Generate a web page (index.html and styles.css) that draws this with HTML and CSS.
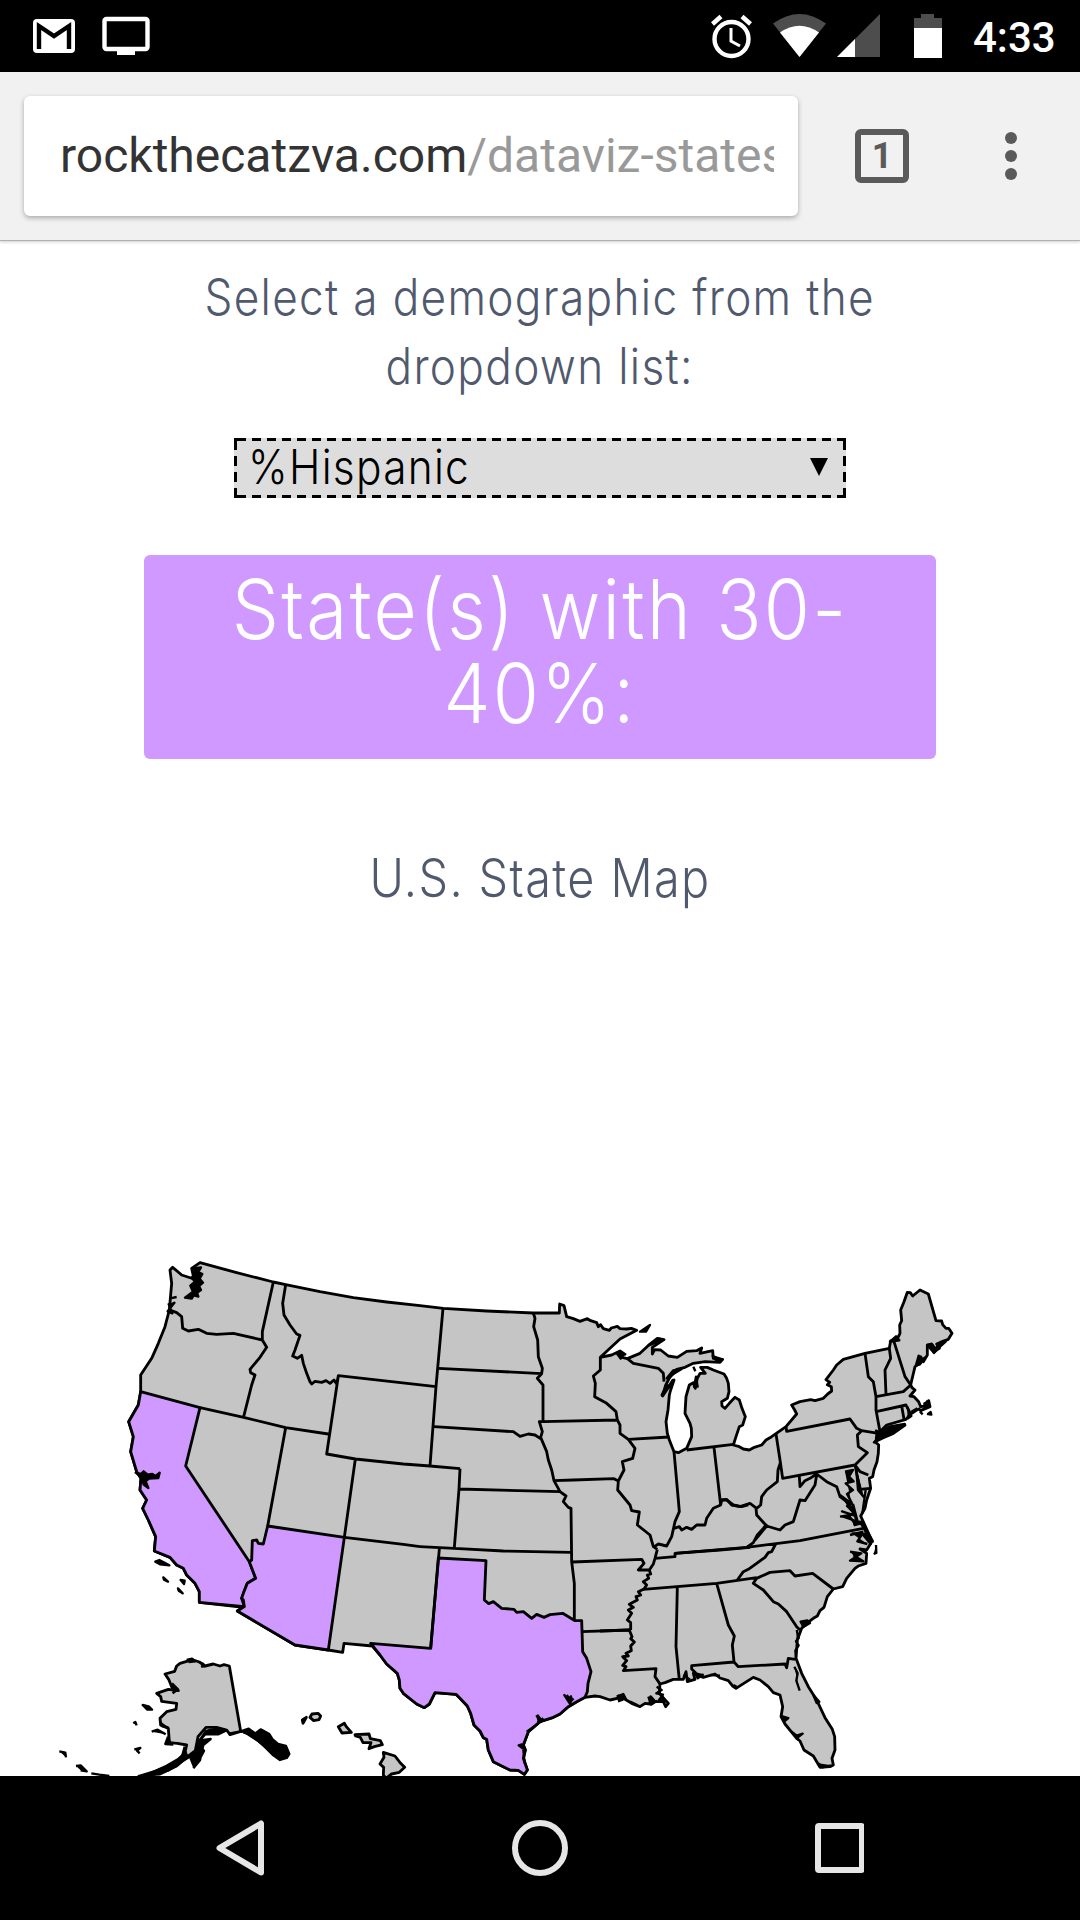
FILE: index.html
```html
<!DOCTYPE html>
<html lang="en">
<head>
<meta charset="utf-8">
<title>U.S. State Map</title>
<link rel="stylesheet" href="styles.css">
</head>
<body>
<header class="status">
  <svg class="status-left" width="120" height="72" viewBox="32 0 120 72">
    <rect x="33" y="19" width="42" height="34" rx="4" fill="#fff"/>
    <path d="M39 49V26l15 10 15-10v23" fill="none" stroke="#000" stroke-width="4.4"/>
    <rect x="104.500" y="19" width="43" height="30" rx="2" fill="none" stroke="#fff" stroke-width="4.400"/>
    <path d="M117 50h18v5h-18z" fill="#fff"/>
  </svg>
  <svg class="status-right" width="236" height="72" viewBox="708 0 236 72">
    <g fill="none" stroke="#fff">
      <circle cx="731.500" cy="39" r="17" stroke-width="4.400"/>
      <path d="M712.500 24l8.500-7.500M750.500 24l-8.500-7.500" stroke-width="4.500"/>
      <path d="M731 28v13l9 5" stroke-width="3"/>
    </g>
    <path d="M799.500 57l-26.500-33.500q26.500-19 53 0z" fill="#4d4d4d"/>
    <path d="M799.500 57l-19.500-24.500q19.500-13.500 39 0z" fill="#fff"/>
    <path d="M837 57L880 14v43z" fill="#4d4d4d"/>
    <path d="M837 57l18-18v18z" fill="#fff"/>
    <path d="M914 18h7v-4h13v4h8v11h-28z" fill="#4d4d4d"/>
    <path d="M914 28h28v30h-28z" fill="#fff"/>
  </svg>
  <span class="clock">4:33</span>
</header>
<div class="toolbar">
  <div class="omnibox"><div class="url">rockthecatzva.com<span>/dataviz-states</span></div></div>
  <div class="tabs">1</div>
  <div class="menu"><i></i><i></i><i></i></div>
</div>
<main>
  <p class="prompt"><span class="line">Select a demographic from the</span><span class="line">dropdown list:</span></p>
  <div class="select"><span class="value">%Hispanic</span><svg width="18" height="18" viewBox="0 0 18 18"><path d="M0 0h18L9 18z"/></svg></div>
  <div class="banner"><span class="line">State(s) with 30-</span><span class="line">40%:</span></div>
  <h2><span class="line">U.S. State Map</span></h2>
  <svg class="map" width="1080" height="526" viewBox="-360 0 3240 1578">
    <!-- contiguous states -->
    <path class="land" d="M240 38L350 68 460 96 497 104 600 125 700 143 800 156 900 167 970 175 1100 183 1240 189 1318 189 1319 162 1332 167 1340 200 1360 206 1380 214 1402 206 1412 212 1430 218 1435 230 1442 224 1450 236 1468 241 1474 234 1492 229 1500 236 1520 237 1534 235 1550 241 1500 267 1470 295 1441 322 1475 315 1500 303 1515 313 1502 309 1506 322 1522 326 1560 310 1590 282 1612 265 1632 269 1615 280 1597 292 1597 312 1604 299 1622 300 1645 318 1672 322 1700 304 1730 302 1745 294 1740 310 1778 302 1780 325 1808 328 1800 337 1755 335 1720 340 1695 352 1670 358 1648 384 1636 408 1628 438 1640 420 1662 390 1652 420 1648 435 1644 480 1638 515 1642 550 1648 570 1662 605 1675 608 1700 595 1715 560 1714 535 1710 520 1695 490 1698 440 1708 405 1720 398 1726 415 1732 385 1740 370 1756 370 1742 352 1762 352 1780 360 1812 372 1820 385 1825 400 1827 425 1822 445 1805 455 1806 468 1815 475 1828 460 1845 442 1858 450 1866 475 1876 500 1868 525 1858 530 1848 560 1840 585 1858 590 1870 597 1888 600 1903 592 1925 585 1938 570 1955 560 1998 530 2030 492 2024 480 2015 465 2040 455 2072 449 2085 452 2110 445 2123 432 2135 423 2134 410 2122 404 2129 397 2118 389 2140 360 2150 345 2170 328 2235 310 2308 295 2312 273 2330 270 2340 250 2339 225 2345 212 2342 180 2352 155 2362 127 2371 128 2378 138 2400 120 2425 132 2448 212 2465 213 2468 224 2478 235 2486 235 2496 250 2485 268 2468 274 2450 282 2458 295 2442 305 2436 284 2422 285 2422 315 2410 335 2402 320 2400 340 2385 350 2379 375 2372 405 2376 413 2385 420 2370 438 2382 440 2396 455 2402 470 2424 467 2426 452 2430 470 2402 482 2397 477 2390 480 2372 492 2358 508 2300 525 2280 545 2355 525 2320 550 2290 563 2265 575 2276 585 2275 610 2271 635 2262 660 2258 680 2248 685 2252 715 2240 750 2235 775 2222 798 2232 820 2250 860 2257 872 2240 900 2220 897 2240 910 2238 940 2215 948 2205 955 2180 985 2168 1010 2140 1017 2122 1040 2112 1072 2100 1082 2092 1098 2080 1105 2060 1120 2045 1135 2032 1170 2028 1225 2045 1270 2065 1310 2090 1350 2115 1403 2137 1438 2144 1460 2145 1500 2136 1525 2140 1545 2130 1550 2100 1552 2080 1518 2052 1500 2040 1473 2030 1465 1995 1422 1983 1400 1988 1370 1980 1335 1960 1328 1945 1310 1920 1290 1900 1282 1875 1298 1848 1315 1838 1308 1825 1292 1800 1284 1785 1272 1750 1282 1720 1270 1725 1288 1702 1295 1698 1265 1690 1288 1660 1288 1635 1298 1620 1302 1618 1330 1645 1360 1637 1370 1630 1355 1605 1355 1592 1340 1590 1362 1575 1360 1560 1370 1535 1360 1505 1342 1470 1350 1440 1340 1425 1338 1395 1342 1370 1355 1345 1370 1320 1392 1300 1402 1260 1415 1225 1445 1210 1485 1216 1500 1210 1525 1222 1560 1213 1573 1195 1561 1170 1560 1150 1550 1120 1535 1105 1500 1100 1468 1090 1463 1080 1443 1062 1425 1052 1390 1042 1368 1020 1345 1008 1333 945 1328 928 1362 913 1373 890 1362 850 1330 840 1315 838 1290 832 1270 800 1242 780 1215 757 1188 672 1180 668 1207 625 1200 525 1185 352 1083 370 1072 238 1057 238 1025 225 1000 200 975 190 955 170 945 150 922 103 903 107 860 85 810 68 775 80 750 60 720 63 685 50 665 32 605 40 560 26 515 55 465 62 425 62 375 95 325 115 280 135 230 148 180 155 100 150 60 158 52 185 75 222 87 215 55z"/>
    <!-- highlighted states -->
    <path class="hit" d="M62 425L240 473 197 648 388 935 407 985 382 1000 365 1045 373 1070 238 1057 238 1025 225 1000 200 975 190 955 170 945 150 922 103 903 107 860 85 810 68 775 80 750 60 720 63 685 50 665 32 605 40 560 26 515 55 465z"/>
    <path class="hit" d="M443 828L673 862 625 1200 525 1185 352 1083 373 1070 370 1050 365 1045 370 1030 382 1000 407 985 388 935 395 930 397 872 410 870 415 880 430 882z"/>
    <path class="hit" transform="translate(660 870)" d="M295 54L438 62 433 180 446 191 460 185 485 205 522 208 530 217 550 215 575 235 590 223 612 232 630 224 668 220 705 242 725 242 728 335 740 355 753 395 744 430 742 455 735 472 710 485 685 500 660 522 640 532 600 545 565 575 550 615 556 630 550 655 562 690 553 703 535 691 510 690 490 680 460 665 445 630 440 598 430 593 420 573 402 555 392 520 382 498 360 475 348 463 285 458 268 492 253 503 230 492 190 460 180 445 178 420 172 400 140 372 120 345 92 310 272 325z"/>
    <g class="border">
      <path d="M150 180L170 188 185 200 188 235 205 243 235 238 260 250 290 253 340 250 427 270M460 96L427 245 427 270 440 292 420 322 390 358 392 368 405 375 395 405 371 500M497 104L488 160 492 195 510 225 530 252 540 256 525 300 518 318 532 325 545 316 550 340 560 370 570 395 575 402 585 394 605 397 618 392 630 400 642 390 650 402 655 377 948 410M240 473L371 502 497 533 625 552M655 377L620 612 706 627 850 642 930 648 1020 656M969 175L948 410 930 648M497 533L443 828M706 627L673 862M673 862L850 883 900 890M958 897L932 1195"/>
      <path transform="translate(900 60)" d="M340 129L345 145 341 170 353 210 355 260 367 295 365 311 352 325 369 345 369 455 358 455 367 485 362 502 380 545 385 570 395 600 402 632 420 665 438 678 430 695 445 712 453 715 455 875 463 940 463 1050M55 295L365 311M42 470L280 485 300 499 325 492 345 495 365 508M120 596L117 657 103 833M117 657L420 665M0 830L103 835 250 843 453 847M369 455L592 450M402 632L460 630 582 626 595 633M541 262V300L520 318 526 340 524 380 560 400 588 425 592 450 600 465 600 490 625 508 645 535 638 565 607 575 612 600 595 633 593 660 630 705 635 722 658 726 652 765 690 795 700 830 712 838M625 508L748 501M622 266L640 280 715 295 730 310 732 335M762 545L775 690 778 725 765 755 755 800 740 828 715 822 700 832M882 532L902 705M800 540L940 523M762 775L778 770 785 780 800 772 815 778 830 765 855 765 860 745 880 715 902 705 905 690 920 690 940 705 965 710 985 705M457 876L665 868 672 880 655 900 688 900M712 838L705 865 700 882 688 900 692 912 682 915 686 925 670 935 680 945 672 957 655 965 662 975 648 980 652 990 628 1003 640 1012 625 1020 635 1030 622 1050 632 1058 632 1080M705 865L765 860V850L900 840 990 832"/>
      <path transform="translate(1440 810)" d="M225 100L440 82 600 62 790 25M130 208L350 190 470 173M527 72L515 95 505 98 495 112 470 130 445 148 430 155 412 180M440 82L460 68 472 45 490 25 500 12M700 207L638 160 585 168 570 152 510 157 470 175 460 190 490 210 520 245 535 252 560 275 590 320 600 330M350 190L385 315 403 348 397 375 402 425M288 460L275 447 275 437 402 426 415 440 555 432 560 443 565 415 585 418M232 202L228 380 238 480M0 333L88 330 96 350 92 356 103 366 92 378 94 392 78 400 85 408 68 410 80 422 68 436 78 440 70 452 168 446 165 470 180 492"/>
      <path transform="translate(1740 60)" d="M228 492L240 570 248 625 465 585M258 470L260 484 450 447 470 475 485 482 472 495 475 530 502 548 465 585M485 482L535 490M495 250L505 320 520 335 528 380 528 420 540 485M528 380L610 365 632 345M568 235L572 265 555 300 558 375M582 215L615 320 632 345M532 424L605 408 618 405 630 430M605 408L612 448M465 585L480 658 510 655M465 585L480 605 505 615M65 690L80 688 95 705 120 710 150 700 170 715 182 705 185 680 200 660 232 635 234 600 242 575M168 715L170 735 200 768 240 780 255 765 280 755 300 690 315 692 345 645 350 615M298 620L300 650 315 632 330 625 350 612 380 635 410 650 420 680 440 695 460 720M200 768L165 810"/>
      <path transform="translate(660 870)" d="M725 275L870 270M680 465L690 485 700 475M590 525L600 545 610 535"/>
    </g>
    <!-- islands, bays and ragged shoreline -->
    <g class="rough">
      <path d="M218 55l25 -3-8 14 12 6-8 14 10 12-12 10 6 12-12 8 4 12-14-4-6 10-20-3 24-18-8-18 14-12-10-12 8-8zM150 145l20-4M145 160l12 30-14-6 22-28M47 668l16 4 8-8 12 10 14-2 10 6 12-10-4 16-28 2-10 8 8 20-14-10-6-22zM106 935l12-5 30 16-28-3zM130 982l14 13-12-6zM182 990l12 2-2 10zM174 1015l14 15-12-8z"/>
      <path transform="translate(900 60)" d="M660 185l30-20-12 20zM590 250l22 2-10 14zM686 226l30-20 14 3-24 10zM878 258l28 10-16 5zM725 375l15-30 8 5 10-20-16 25zM740 325l20-24 25-4-20 12zM822 350l6-30 5 30zM820 290l6 14"/>
      <path transform="translate(1740 60)" d="M570 215l28-4-10-12zM682 225l20 24 15-16 20-18-22 8-8 14-12-16zM648 285l8-28 8 14 10-8-14 20zM622 410l12 28-12 8M634 425l18-10M670 400l15 5-4-14M660 425l8 8M684 432l8-6 2 8zM528 482l14 6 24-18 48-8-30 22-56 24 2-18zM520 520l12-14M435 605l24-5-12 20 14 14-24 6 22 20-18 12 14 26-14 10 20 20-14 10 20 24M420 675l40 30 12 46M420 740l36-6-30-10 40 14 6 20M468 590l6 70 18 22M497 660l-10 70M484 755l30 50M450 795l40-10"/>
      <path transform="translate(1440 810)" d="M755 0l36 8-30 8M755 40l45 2 12 30-25-30-15 22 30 8M750 95l34 5-34 22 40 2-30-18M782 10l36 55-16-8M828 75l1 24-8 3M602 305l20-4 8 8-20 12zM590 330l6 24-8 10 8 12-10 16 2 20M583 440l10 20-4 22 10 30M640 525l18 20-8 4zM545 588l20 6-12 10zM575 635l15 12 18-6-18 14M655 730l12 12 28-6M250 465l20 14M283 455l10 20 18-12M330 465l30 2M170 500l15 10-16 10 20 4-12 16 24 4M50 530l20-8 8 16M145 530l8 24 18-12M400 495l15 8"/>
      <path transform="translate(660 870)" d="M673 465l12 12 8-8-2 24zM592 525l14 18-14 4M548 612l-12 4 16 12M560 575l24-16M550 630l4 40M833 465l15 14-14 5M870 485l22 10"/>
    </g>
    <g transform="translate(-240 1110)">
      <path class="land" d="M568 138L552 134 540 138 520 132 495 138 478 126 460 120 440 124 420 130 410 138 404 154 375 162 386 178 395 200 415 212 385 208 350 220 362 230 365 244 410 250 408 268 380 275 360 295 362 315 385 325 388 368 412 370 440 375 434 400 415 418 380 438 320 465 360 462 410 438 440 412 466 392 474 350 498 322 530 322 560 330 570 344 602 334z"/>
      <g class="rough">
        <path d="M434 380l-8 30-36 28-40 14-54 16 40-3 50-14 36-24 42-26 10-34 24-34 34-8 24 8-22 10-38 0-16 18 32-4-22 18-10 46-20 24M480 375l12 18-16 30-16 0zM570 340l32-6 24-8 20 14 16-12 26 14 10 16 16 14 24 6 10 24-8 12-20 6-20-14-24-24-16-14-14-18-26-12M610 338l40 8 72 66M665 340l55 44M385 322l-20-4-4-14M335 335l18-6 24 14M384 350l-8 22 24 2M396 190l18 18-16 12M308 255l18 4 10 10-14 0zM280 310l6-4 4 10M283 388l18-4-10 8 8 8M58 394l18 4 2 14M108 438l14-2 18 18-18-3M154 460l24 4 30 4M440 120l16-4 10 8-20 2M490 128l-4 12 10-2"/>
      </g>
      <path class="land" d="M787 300l12-8-10 18zM816 282l18-2 8 8-5 11-16 3-11-10zM895 320l18-10 6 10 15 17-28 2zM945 344l42-2 4 14 30 6 6 12-24 6-16 6 6-18-24 0-8-16-14-4zM1030 397L1065 408 1082 430 1094 442 1078 457 1055 462 1038 475 1030 465 1031 442 1020 432 1032 412z"/>
    </g>
  </svg>
</main>
<nav class="navbar">
  <svg width="648" height="144" viewBox="216 1776 648 144">
    <g fill="none" stroke="#e6e6e6" stroke-width="6" stroke-linejoin="round">
      <path d="M261 1823.500v49L219.500 1848z"/>
      <circle cx="540" cy="1848" r="25"/>
      <rect x="818" y="1826" width="44" height="44" rx="1"/>
    </g>
  </svg>
</nav>
</body>
</html>
```
FILE: styles.css
```css
* { box-sizing: border-box; }
body {
  margin: 0;
  width: 1080px;
  height: 1920px;
  overflow: hidden;
  display: flex;
  flex-direction: column;
  background: #fff;
  font-family: Roboto, "Liberation Sans", sans-serif;
}
svg { display: block; flex: none; }
.status {
  height: 72px;
  flex: none;
  display: flex;
  align-items: center;
  padding: 0 26px 0 32px;
  background: #000;
  color: #fff;
}
.status-right { margin-left: auto; }
.clock {
  width: 81px;
  margin-left: 29px;
  padding-top: 3px;
  font-size: 42px;
  font-weight: 500;
  line-height: 1;
  white-space: nowrap;
}
.toolbar {
  position: relative;
  height: 169px;
  flex: none;
  display: flex;
  align-items: center;
  padding: 0 63px 1px 24px;
  background: #f1f1f1;
  border-bottom: 1px solid #b0b0b0;
  box-shadow: 0 1px 3px rgba(0, 0, 0, .2);
}
.omnibox {
  width: 774px;
  height: 120px;
  padding: 0 24px 0 36px;
  background: #fff;
  border-radius: 6px;
  box-shadow: 0 2px 5px rgba(0, 0, 0, .3);
}
.url {
  overflow: hidden;
  white-space: nowrap;
  font-size: 48px;
  line-height: 120px;
  color: #333;
}
.url span { color: #999; }
.tabs {
  width: 54px;
  height: 54px;
  margin-left: 57px;
  border: 6px solid #5a5a5a;
  border-radius: 6px;
  color: #5a5a5a;
  font-size: 36px;
  font-weight: 700;
  line-height: 43px;
  text-align: center;
}
.menu {
  margin-left: auto;
  display: grid;
  gap: 6px;
}
.menu i { width: 12px; height: 12px; border-radius: 50%; background: #5a5a5a; }
main {
  flex: 1;
  min-height: 0;
  overflow: hidden;
  display: flex;
  flex-direction: column;
  align-items: center;
  font-family: Inter, Roboto, sans-serif;
  font-weight: 300;
  letter-spacing: .03em;
  color: #50596e;
}
.line { display: block; white-space: nowrap; transform: scaleX(.883); }
.prompt {
  margin: 22px 0 0;
  font-size: 50px;
  line-height: 69px;
  letter-spacing: .03em;
  text-align: center;
}
.select {
  --h: repeating-linear-gradient(90deg, transparent 0 3px, #000 3px 12px, transparent 12px 15px);
  --v: repeating-linear-gradient(transparent 0 2px, #000 2px 12px, transparent 12px 16px);
  width: 612px;
  height: 60px;
  margin-top: 37px;
  padding: 0 18px 3px 14px;
  display: flex;
  align-items: center;
  justify-content: space-between;
  background:
    linear-gradient(#000, #000) 0 0 / 3px 3px no-repeat,
    linear-gradient(#000, #000) 100% 0 / 3px 3px no-repeat,
    linear-gradient(#000, #000) 0 100% / 3px 3px no-repeat,
    linear-gradient(#000, #000) 100% 100% / 3px 3px no-repeat,
    var(--h) 0 0 / 100% 3px no-repeat,
    var(--h) 0 100% / 100% 3px no-repeat,
    var(--v) 0 0 / 3px 100% no-repeat,
    var(--v) 100% 0 / 3px 100% no-repeat,
    #ddd;
  color: #000;
  font-size: 48px;
  line-height: 54px;
  letter-spacing: .03em;
}
.value { transform: scaleX(.883); transform-origin: left; }
.banner {
  width: 792px;
  height: 204px;
  margin-top: 57px;
  padding-top: 12px;
  border-radius: 6px;
  background: #d099ff;
  color: #fff;
  font-size: 83px;
  line-height: 84px;
  letter-spacing: .03em;
  text-align: center;
}
.banner .line { transform: scaleX(.9); }
h2 {
  margin: 83px 0 0;
  height: 72px;
  font-size: 53px;
  font-weight: 300;
  line-height: 72px;
  letter-spacing: .03em;
}
.map { margin-top: 336px; }
.land, .hit, .border, .rough {
  stroke: #000;
  stroke-width: 8.5;
  stroke-linejoin: round;
}
.land { fill: #c5c5c5; }
.hit { fill: #d099ff; }
.border { fill: none; }
.rough { fill: #000; stroke-width: 7; }
.navbar {
  height: 144px;
  flex: none;
  display: flex;
  justify-content: center;
  background: #000;
}
```
